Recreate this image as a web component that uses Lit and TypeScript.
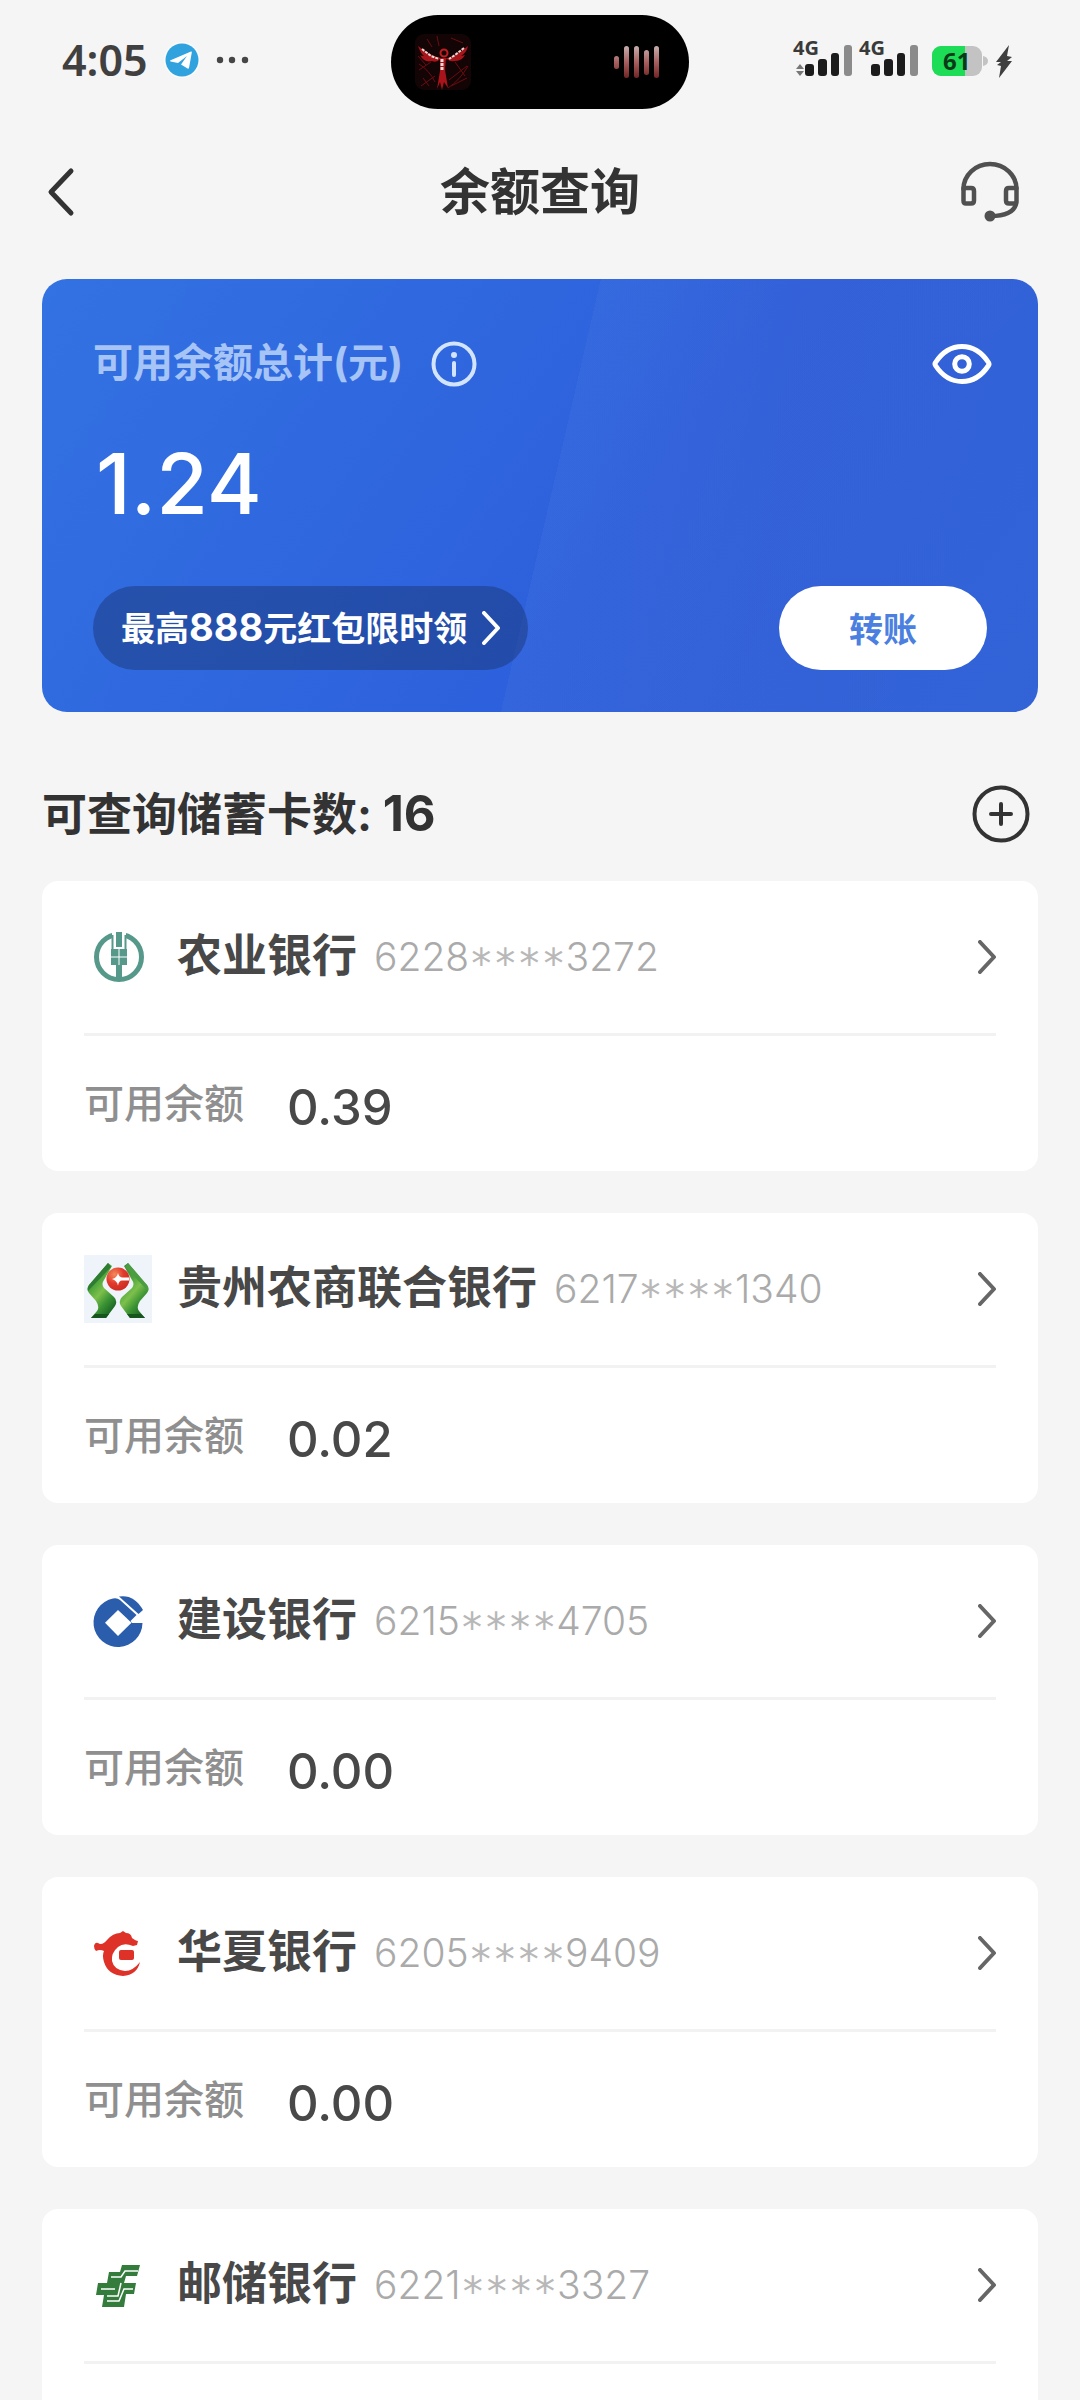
import { LitElement, html, svg, css } from "lit";
import { customElement, property } from "lit/decorators.js";

const logos: Record<string, unknown> = {
  abc: svg`
    <circle cx="35" cy="34" r="22.5" fill="none" stroke="#56998a" stroke-width="5"/>
    <rect x="28" y="6" width="14" height="22" fill="#fff"/>
    <path d="M28.500 12v15h13V12" fill="none" stroke="#56998a" stroke-width="2"/>
    <path d="M30 10h10v14H30z" fill="#fff"/>
    <rect x="32" y="9" width="6" height="15" fill="#56998a"/>
    <path d="M27 26h16v16h-5v14h-6V42h-5z" fill="#56998a"/>
    <path d="M35 26v16M27 34h16" stroke="#fff" stroke-width="1" fill="none"/>`,
  guizhou: svg`
    <defs>
      <linearGradient id="leaf" x1="0" y1="0" x2=".6" y2="1">
        <stop offset="0" stop-color="#2f7d33"/><stop offset=".4" stop-color="#4da53b"/>
        <stop offset=".6" stop-color="#7dc04c"/><stop offset=".8" stop-color="#3c9434"/><stop offset="1" stop-color="#1d6a26"/>
      </linearGradient>
      <radialGradient id="sun" cx=".35" cy=".3" r=".8">
        <stop offset="0" stop-color="#f58a5c"/><stop offset=".5" stop-color="#e2392c"/><stop offset="1" stop-color="#c9291f"/>
      </radialGradient>
    </defs>
    <rect width="68" height="68" fill="#eff3fa"/>
    <path d="M24 8 5 30Q2 34 5 38L12 46Q16 52 13 56L7 63H22L31 51Q34 46 30 42L20 33Q17 29 20 25L28 11z" fill="url(#leaf)"/>
    <path d="M24 8 5 30Q3 33 4 36L27 12z" fill="#2e7d32"/>
    <path d="M44 8 63 30Q66 34 63 38L56 46Q52 52 55 56L61 63H46L37 51Q34 46 38 42L48 33Q51 29 48 25L40 11z" fill="url(#leaf)"/>
    <path d="M44 8 63 30Q65 33 64 36L41 12z" fill="#4c9c42"/>
    <path d="M7 63H22l3-4H11zM61 63H46l-3-4h14z" fill="#17551f"/>
    <circle cx="34" cy="24" r="11.5" fill="url(#sun)"/>
    <path d="M34 18q1 4 4 4.500h7v3h-7q-3 0-4 5-1-5-6-6.500 5-1 6-6z" fill="#fff"/>`,
  ccb: svg`
    <path d="M58.500 36A24.500 24.500 0 1 1 29 11.500Q33 10.500 36 13L52.500 28 46.500 34 48 36z" fill="#2a5dac"/>
    <path d="M34 23 47.500 35.700 34 49 21 35.700z" fill="#fff"/>
    <path d="M35 9.500Q50 7 59 23L54.500 27z" fill="#2a5dac"/>`,
  hxb: svg`
    <path d="M10 27q1-4 4-3 4 3 9-3 6-7 13-7l3-2 3 2q5 0 6 5 4 3 6 3l-1 4-4 1q-9-4-15 1-7 6-6 14 2 9 13 10 8 0 15-9-3 13-17 14-15-1-19-14-2-7 0-11-4-2-8 0-2-2-2-5z" fill="#de3127"/>
    <rect x="35" y="31" width="15" height="10" rx="2" fill="#de3127"/>`,
  psbc: svg`
    <path d="M38 14H56L53 25H42L40 32H52L50 43H42L40 56H18L20 44H12L14 32H23L25 21H36z" fill="#337c3b"/>
    <path d="M27 26h10l4-6h13M17 38h14M23 45h11l3-13M23 50h12l5-12h9" fill="none" stroke="#fff" stroke-width="1.500"/>`,
};

interface Account {
  bank: string;
  card: [string, string];
  balance: string;
  logo: string;
}

const accounts: Account[] = [
  { bank: "农业银行", card: ["6228", "3272"], balance: "0.39", logo: "abc" },
  { bank: "贵州农商联合银行", card: ["6217", "1340"], balance: "0.02", logo: "guizhou" },
  { bank: "建设银行", card: ["6215", "4705"], balance: "0.00", logo: "ccb" },
  { bank: "华夏银行", card: ["6205", "9409"], balance: "0.00", logo: "hxb" },
  { bank: "邮储银行", card: ["6221", "3327"], balance: "0.00", logo: "psbc" },
];

const chevron = html`<svg width="18" height="34" viewBox="0 0 18 34" fill="none" stroke="currentColor" stroke-width="4" stroke-linecap="round" stroke-linejoin="round" aria-hidden="true"><path d="M2 2 16 17 2 32"/></svg>`;

const reset = css`
  * { box-sizing: border-box; }
  button, a { font: inherit; color: inherit; border: 0; padding: 0; margin: 0; background: none; text-decoration: none; cursor: pointer; }
  svg { display: block; flex: none; }
`;

@customElement("status-bar")
export class StatusBar extends LitElement {
  static styles = [reset, css`
    :host { display: grid; grid-template-columns: 1fr auto 1fr; align-items: center; padding: 15px 62px 0; height: 109px; }
    .left { display: flex; align-items: center; gap: 16px; height: 90px; padding-bottom: 5px; }
    .time { font-family: "Noto Sans", sans-serif; font-size: 43px; font-weight: 600; line-height: 48px; color: #404040; }
    .island { display: flex; align-items: center; justify-content: space-between; width: 298px; height: 94px; border-radius: 47px; background: #000; padding: 0 29px 0 24px; }
    .right { display: flex; align-items: center; justify-content: flex-end; padding: 0 4px 10px 0; }
    .net { font: 700 20px "Noto Sans", sans-serif; }
    .level { font: 700 24px "Noto Sans", sans-serif; }
  `];
  private signal(x: number) {
    return svg`
      <text class="net" x=${x - 12} y="17" fill="#3a3a3a">4G</text>
      <rect x=${x} y="26" width="9" height="12" rx="3" fill="#1c1c1c"/>
      <rect x=${x + 13} y="21" width="9" height="17" rx="3" fill="#1c1c1c"/>
      <rect x=${x + 26} y="15" width="8" height="23" rx="3" fill="#1c1c1c"/>
      <rect x=${x + 39} y="7" width="8" height="31" rx="3" fill="#8b8b8b"/>`;
  }
  render() {
    return html`
      <div class="left">
        <span class="time">4:05</span>
        <svg width="36" height="36" viewBox="0 0 36 36" aria-hidden="true">
          <circle cx="18" cy="18" r="18" fill="#fbfbfb"/>
          <circle cx="18" cy="18" r="16.500" fill="#30a3df"/>
          <path d="M6 18.500 27 9.500q1-.3.800 1L25 26q-.4 1-1.500.5L17 22.500l6-8.500-9 7-7.500-1.500z" fill="#fff"/>
        </svg>
        <svg width="34" height="8" viewBox="0 0 34 8" fill="#454545" aria-hidden="true"><circle cx="4" cy="4" r="3.200"/><circle cx="16" cy="4" r="3.200"/><circle cx="29" cy="4" r="3.200"/></svg>
      </div>
      <div class="island">
        <svg width="56" height="56" viewBox="0 0 56 56" fill="none" aria-hidden="true">
          <rect width="56" height="56" rx="9" fill="#130506"/>
          <path d="M4 36l12-8M6 52l14-10M34 46l18-14M36 52l16-8M12 5l5 8M36 4l12 5M3 22l8 9M40 28l10 14M8 44l6 8M22 2l2 10M33 54q12-8 20-22M4 30q10 6 16 18" stroke="#6b0c10" stroke-width="1"/>
          <path d="M3 12q3 8 6 10-3 0-4-1 4 8 12 6 5 2 8-2l3 2 4-2q3 3 7 2 8 0 11-6l-4 1q6-4 7-10-6 5-14 10l-10 3-10-3q-9-4-16-10z" fill="#a8141a"/>
          <path d="M25 24h6l-1 12 3 18-4-6-2 8-2-8-3 7 3-18z" fill="#a8141a"/>
          <path d="M7 15l9 7 8 3M49 14l-9 7-6 4" stroke="#efd5d0" stroke-width="2" stroke-dasharray="3 1"/>
          <path d="M27 25v11" stroke="#f2dcd8" stroke-width="3" stroke-dasharray="3 1"/>
          <circle cx="29" cy="19" r="3.500" stroke="#c01c22" stroke-width="2"/>
        </svg>
        <svg width="46" height="34" viewBox="0 0 46 34" aria-hidden="true">
          <defs><linearGradient id="wave" x1="0" y1="0" x2="0" y2="34" gradientUnits="userSpaceOnUse"><stop offset="0" stop-color="#c9b4b4"/><stop offset=".5" stop-color="#a86060"/><stop offset="1" stop-color="#702020"/></linearGradient></defs>
          <g fill="url(#wave)"><rect x="0" y="11" width="5" height="13" rx="2.500"/><rect x="10" y="1" width="5" height="32" rx="2.500"/><rect x="20" y="1" width="5" height="32" rx="2.500"/><rect x="30" y="5" width="5" height="25" rx="2.500"/><rect x="40" y="1" width="5" height="32" rx="2.500"/></g>
        </svg>
      </div>
      <div class="right">
        <svg width="222" height="54" viewBox="0 -8 222 54" role="img" aria-label="4G 61%">
          <path d="M8 26l4 5H4zM8 38l4-5H4z" fill="#777"/>
          ${this.signal(13)}${this.signal(79)}
          <defs><clipPath id="cell"><rect x="140" y="8" width="50" height="30" rx="9"/></clipPath></defs>
          <g clip-path="url(#cell)"><rect x="140" y="8" width="50" height="30" fill="#c3c3c3"/><rect x="140" y="8" width="33" height="30" fill="#1ddc56"/></g>
          <path d="M191 18q5 1 5 5t-5 5z" fill="#c3c3c3"/>
          <text class="level" x="151" y="32" fill="#0b3a18">61</text>
          <path d="M217 7 204 24h5l-4 3 4 1-2 12 13-17h-5l5-4-5-1z" fill="#3f3f3f"/>
        </svg>
      </div>`;
  }
}

@customElement("balance-card")
export class BalanceCard extends LitElement {
  static styles = [reset, css`
    :host { display: flex; flex-direction: column; height: 433px; border-radius: 25px; overflow: hidden; padding: 55px 51px 42px; color: #fff;
      background: linear-gradient(103deg, transparent 51%, rgba(255, 255, 255, 0.03) 51%, rgba(110, 100, 180, 0.1) 72%, rgba(90, 110, 190, 0.1)), linear-gradient(125deg, #3372e2, #2d60dc 58%, #2d62da); }
    .head { display: flex; align-items: center; height: 60px; gap: 27px; }
    .label { font-size: 40px; font-weight: 700; line-height: 60px; padding-bottom: 2px; color: #a6c4f6; }
    .info { color: #d3e4ff; }
    .eye { margin-left: auto; margin-right: -6px; }
    .total { font-size: 84px; font-weight: 500; line-height: 100px; margin-top: 40px; padding-left: 3px; }
    .foot { display: flex; justify-content: space-between; align-items: center; margin-top: auto; }
    .promo { display: flex; align-items: center; gap: 15px; height: 84px; padding: 0 28px; border-radius: 42px; background: rgba(25, 55, 120, 0.5); font-size: 34px; font-weight: 700; }
    .promo-text { line-height: 48px; }
    .amount { font-size: 38px; }
    .transfer { height: 84px; width: 208px; padding-bottom: 2px; border-radius: 42px; background: #fff; color: #4b7fe0; font-size: 34px; font-weight: 700; }
  `];
  render() {
    return html`
      <div class="head">
        <span class="label">可用余额总计(元)</span>
        <button class="info" aria-label="说明">
          <svg width="48" height="48" viewBox="0 0 48 48" fill="none" stroke="currentColor" stroke-width="4" stroke-linecap="round"><circle cx="24" cy="24" r="20.500"/><path d="M24 23v12"/><circle cx="24" cy="15" r="3" fill="currentColor" stroke="none"/></svg>
        </button>
        <button class="eye" aria-label="显示余额">
          <svg width="62" height="44" viewBox="0 0 62 44" fill="none" stroke="currentColor" stroke-width="5" stroke-linejoin="round"><path d="M4.500 20.500Q15 4.500 31 4.500T57.500 20.500Q58.500 22 57.500 23.500 47 39.500 31 39.500T4.500 23.500Q3.500 22 4.500 20.500z"/><circle cx="31" cy="22" r="7.300"/></svg>
        </button>
      </div>
      <div class="total">1.24</div>
      <div class="foot">
        <a class="promo" href="#promo"><span class="promo-text">最高<span class="amount">888</span>元红包限时领</span>${chevron}</a>
        <button class="transfer">转账</button>
      </div>`;
  }
}

@customElement("account-card")
export class AccountCard extends LitElement {
  @property({ attribute: false }) account!: Account;
  static styles = [reset, css`
    :host { display: block; background: #fff; border-radius: 16px; padding: 0 42px; }
    .bank { display: flex; align-items: center; height: 155px; border-bottom: 3px solid #f2f2f2; color: #666; }
    .name { font-size: 45px; font-weight: 600; line-height: 60px; margin: 0 17px 3px 25px; color: #484848; }
    .number { font-size: 39px; font-weight: 300; line-height: 48px; padding-top: 2px; color: #aaa; }
    .mask { font-family: "DejaVu Sans Mono", monospace; font-size: 40px; line-height: 1; vertical-align: -7px; color: #b8b8b8; }
    .go { margin-left: auto; }
    .detail { display: flex; align-items: center; gap: 43px; height: 135px; margin: 0; }
    .caption { font-size: 40px; font-weight: 500; line-height: 60px; color: #8f8f8f; }
    .value { font-size: 49px; font-weight: 500; line-height: 60px; margin: 0; padding-top: 8px; color: #484848; }
  `];
  render() {
    const a = this.account;
    return html`
      <a class="bank" href="#account">
        <svg width="68" height="68" viewBox="0 0 68 68" aria-hidden="true">${logos[a.logo]}</svg>
        <span class="name">${a.bank}</span>
        <span class="number">${a.card[0]}<span class="mask">****</span>${a.card[1]}</span>
        <span class="go">${chevron}</span>
      </a>
      <dl class="detail"><dt class="caption">可用余额</dt><dd class="value">${a.balance}</dd></dl>`;
  }
}

@customElement("app-root")
export class AppRoot extends LitElement {
  static styles = [reset, css`
    :host { display: flex; flex-direction: column; height: 100vh; overflow: hidden; background: #f5f5f5; color: #333; font-family: Inter, "Noto Sans CJK SC", sans-serif; }
    .nav { display: grid; grid-template-columns: 1fr auto 1fr; align-items: center; flex: none; height: 170px; padding: 0 45px 4px; }
    .title { font-size: 50px; line-height: 60px; font-weight: 700; margin: 0; }
    .side { display: flex; justify-self: start; }
    .end { justify-self: end; padding-right: 14px; color: #505050; }
    .content { flex: 1; min-height: 0; overflow-y: auto; scrollbar-width: none; padding: 0 42px 42px; }
    .section { display: flex; align-items: center; justify-content: space-between; height: 169px; padding: 34px 7px 0 0; }
    .heading { margin: 0; padding-top: 2px; font-size: 45px; line-height: 60px; font-weight: 700; }
    .count { font-size: 49px; }
    .list { display: flex; flex-direction: column; gap: 42px; }
  `];
  render() {
    return html`
      <status-bar></status-bar>
      <header class="nav">
        <button class="side" aria-label="返回"><svg width="32" height="50" viewBox="0 0 32 50" fill="none" stroke="#333" stroke-width="5" stroke-linecap="round" stroke-linejoin="round"><path d="M26 4 6 25 26 46"/></svg></button>
        <h1 class="title">余额查询</h1>
        <button class="side end" aria-label="客服">
          <svg width="62" height="62" viewBox="0 0 62 62" fill="none" stroke="currentColor" stroke-width="4.500" stroke-linecap="round" stroke-linejoin="round">
            <path d="M4.500 28a26.500 25 0 0 1 53 0V41q-2 14-26 14"/>
            <path d="M4.500 27v13q0 2.500 2.500 2.500h5q3 0 3-3V30q0-3-3-3H4.500M57.500 27H50q-3 0-3 3v9.500q0 3 3 3h7"/>
            <circle cx="31" cy="55" r="5.500" fill="currentColor" stroke="none"/>
          </svg>
        </button>
      </header>
      <main class="content">
        <balance-card></balance-card>
        <div class="section">
          <h2 class="heading">可查询储蓄卡数: <span class="count">16</span></h2>
          <button aria-label="添加银行卡"><svg width="60" height="60" viewBox="0 0 60 60" fill="none" stroke="#333" stroke-width="4" stroke-linecap="round"><circle cx="30" cy="30" r="26.500"/><path d="M30 20v20M20 30h20"/></svg></button>
        </div>
        <div class="list">${accounts.map((a) => html`<account-card .account=${a}></account-card>`)}</div>
      </main>`;
  }
}
